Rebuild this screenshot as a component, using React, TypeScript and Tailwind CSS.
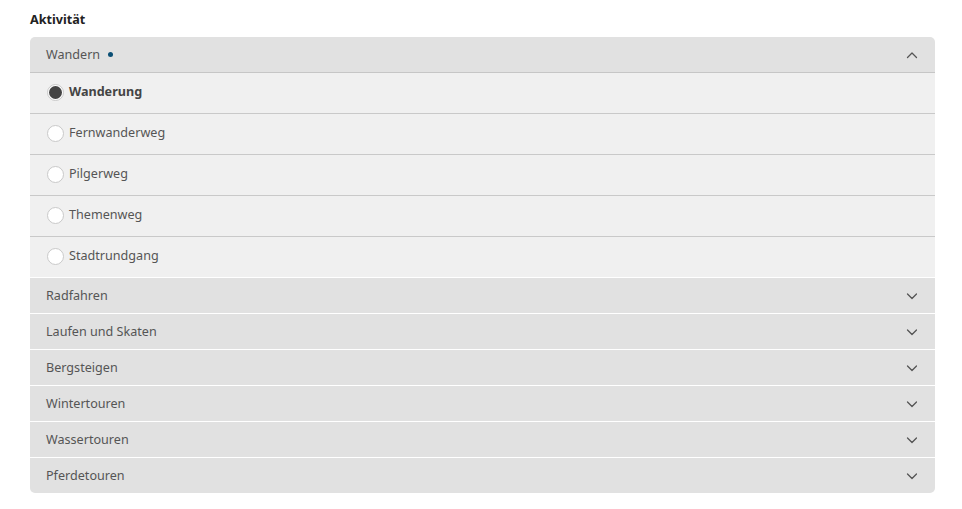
import React from "react";

const Chevron = ({ up }: { up?: boolean }) => (
  <svg width="14" height="14" viewBox="0 0 14 14" fill="none" stroke="#555" strokeWidth="1.3" strokeLinecap="round" strokeLinejoin="round">
    {up ? <path d="M2.5 9.5 L7 5 L11.5 9.5" /> : <path d="M2.5 5 L7 9.5 L11.5 5" />}
  </svg>
);

const options = ["Wanderung", "Fernwanderweg", "Pilgerweg", "Themenweg", "Stadtrundgang"];
const collapsed = ["Radfahren", "Laufen und Skaten", "Bergsteigen", "Wintertouren", "Wassertouren", "Pferdetouren"];

export default function App() {
  return (
    <div className="bg-white w-[962px] h-[509px] px-[30px] pt-[11px] text-[#555]" style={{ fontFamily: "'Source Sans Pro', 'Noto Sans', sans-serif" }}>
      <div className="text-[12.6px] font-bold text-[#222] leading-[17px] mb-[9px]">Aktivität</div>
      <div className="w-[905px] rounded-[5px] overflow-hidden bg-[#e1e1e1]">
        <div className="h-[36px] flex items-center justify-between pl-[16px] pr-[16px] border-b border-[#c6c6c6]">
          <div className="flex items-center text-[12.6px] pt-[1px]">
            Wandern
            <span className="ml-[8px] w-[5px] h-[5px] rounded-full bg-[#0b4f75] inline-block" />
          </div>
          <Chevron up />
        </div>
        {options.map((o, i) => (
          <div key={o} className={`h-[41px] flex items-center pl-[17px] pb-[1px] bg-[#f0f0f0] ${i < options.length - 1 ? "border-b border-[#c9c9c9]" : "border-b border-white"}`}>
            {i === 0 ? (
              <span className="w-[17px] h-[17px] rounded-full bg-white border border-[#c9c9c9] flex items-center justify-center">
                <span className="w-[13px] h-[13px] rounded-full bg-[#444]" />
              </span>
            ) : (
              <span className="w-[17px] h-[17px] rounded-full bg-white border border-[#c9c9c9]" />
            )}
            <span className={`ml-[5px] text-[12.6px] ${i === 0 ? "font-bold text-[#444]" : ""}`}>{o}</span>
          </div>
        ))}
        {collapsed.map((c, i) => (
          <div key={c} className={`flex items-center justify-between pl-[16px] pr-[16px] ${i < collapsed.length - 1 ? "h-[36px] border-b border-white" : "h-[35px]"}`}>
            <span className="text-[12.6px] pt-[1px]">{c}</span>
            <Chevron />
          </div>
        ))}
      </div>
    </div>
  );
}
